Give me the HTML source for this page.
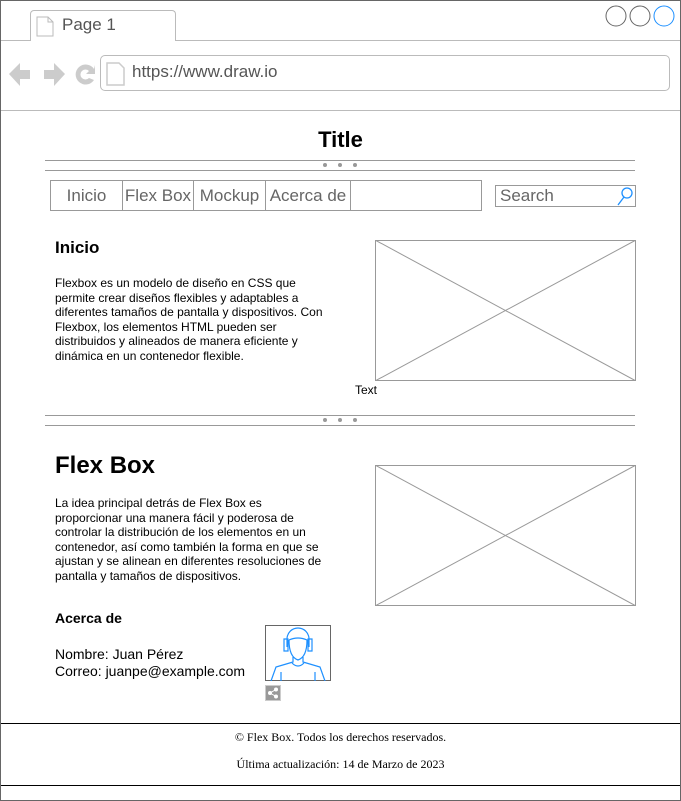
<!DOCTYPE html>
<html><head><meta charset="utf-8"><style>
*{margin:0;padding:0;box-sizing:border-box}
body{width:681px;height:801px;position:relative;overflow:hidden;background:#fff;font-family:"Liberation Sans",Arial,sans-serif;color:#000}
.a{position:absolute}
.hl{position:absolute;height:1px;background:#999}
.dot{position:absolute;width:4px;height:4px;border-radius:50%;background:#999}
.nav div{position:absolute;top:0;height:30px;border-right:1px solid #999;font-size:17px;color:#666;line-height:30px;text-align:center}
p.t{font-size:12px;line-height:14.6px;width:280px}
</style></head><body>
<div class="a" style="left:0;top:0;width:681px;height:801px;border:1px solid #666"></div>
<!-- tab -->
<div class="a" style="left:30px;top:10px;width:146px;height:31px;border:1px solid #bbb;border-bottom:none;border-radius:4px 4px 0 0;background:#fff"></div>
<svg class="a" style="left:36px;top:16px" width="18" height="21"><path d="M1 1h11l5 5v14H1z" fill="#fff" stroke="#bbb"/><path d="M12 1v5h5" fill="none" stroke="#bbb"/></svg>
<div class="a" style="left:62px;top:15px;font-size:17px;color:#555">Page 1</div>
<div class="hl" style="left:1px;top:40px;width:29px;background:#bbb"></div>
<div class="hl" style="left:175px;top:40px;width:505px;background:#bbb"></div>
<svg class="a" style="left:604px;top:4px" width="76" height="24"><circle cx="12" cy="12" r="10" fill="none" stroke="#666"/><circle cx="36" cy="12" r="10" fill="none" stroke="#666"/><circle cx="60" cy="12" r="10" fill="none" stroke="#1e90ff"/></svg>
<!-- address -->
<svg class="a" style="left:8px;top:61px" width="92" height="28"><path d="M1 13l11-11v7h10v9h-10v7z" fill="#ccc"/><path d="M57 13l-11-11v7h-10v9h10v7z" fill="#ccc"/><path d="M86 8a10 10 0 1 0 0 11l-5-2a5 5 0 1 1 0-7l-3 3h9v-9z" fill="#ccc"/></svg>
<div class="a" style="left:100px;top:55px;width:570px;height:36px;border:1px solid #bbb;border-radius:5px"></div>
<svg class="a" style="left:106px;top:62px" width="20" height="24"><path d="M1 1h12l5 5v17H1z" fill="#fff" stroke="#ccc" stroke-width="1.5"/></svg>
<div class="a" style="left:132px;top:62px;font-size:17px;color:#555">https://www.draw.io</div>
<div class="hl" style="left:1px;top:110px;width:679px;background:#bbb"></div>
<!-- title -->
<div class="a" style="left:0;top:127px;width:681px;text-align:center;font-size:22px;font-weight:bold">Title</div>
<div class="hl" style="left:45px;top:160px;width:590px"></div>
<div class="hl" style="left:45px;top:170px;width:590px"></div>
<div class="dot" style="left:323px;top:163px"></div><div class="dot" style="left:338px;top:163px"></div><div class="dot" style="left:353px;top:163px"></div>
<!-- nav -->
<div class="a nav" style="left:50px;top:180px;width:432px;height:31px;border:1px solid #999">
<div style="left:0;width:72px">Inicio</div><div style="left:72px;width:71px">Flex Box</div><div style="left:143px;width:72px">Mockup</div><div style="left:215px;width:85px">Acerca de</div>
</div>
<div class="a" style="left:495px;top:185px;width:141px;height:22px;border:1px solid #999;font-size:17px;color:#666;padding-left:4px;line-height:20px">Search</div>
<svg class="a" style="left:615px;top:186px" width="20" height="20"><circle cx="12" cy="7" r="5" fill="none" stroke="#1e90ff" stroke-width="1.3"/><path d="M9 11L3 19" stroke="#1e90ff" stroke-width="1.3"/></svg>
<!-- section 1 -->
<div class="a" style="left:55px;top:238px;font-size:17px;font-weight:bold">Inicio</div>
<p class="a t" style="left:55px;top:276px">Flexbox es un modelo de diseño en CSS que permite crear diseños flexibles y adaptables a diferentes tamaños de pantalla y dispositivos. Con Flexbox, los elementos HTML pueden ser distribuidos y alineados de manera eficiente y dinámica en un contenedor flexible.</p>
<svg class="a" style="left:375px;top:240px" width="261" height="141"><rect x=".5" y=".5" width="260" height="140" fill="none" stroke="#999"/><path d="M0 0L261 141M261 0L0 141" stroke="#999"/></svg>
<div class="a" style="left:355px;top:383px;font-size:12px">Text</div>
<div class="hl" style="left:45px;top:415px;width:590px"></div>
<div class="hl" style="left:45px;top:425px;width:590px"></div>
<div class="dot" style="left:323px;top:418px"></div><div class="dot" style="left:338px;top:418px"></div><div class="dot" style="left:353px;top:418px"></div>
<!-- section 2 -->
<div class="a" style="left:55px;top:452px;font-size:24px;font-weight:bold">Flex Box</div>
<p class="a t" style="left:55px;top:496px;width:272px">La idea principal detrás de Flex Box es proporcionar una manera fácil y poderosa de controlar la distribución de los elementos en un contenedor, así como también la forma en que se ajustan y se alinean en diferentes resoluciones de pantalla y tamaños de dispositivos.</p>
<svg class="a" style="left:375px;top:465px" width="261" height="141"><rect x=".5" y=".5" width="260" height="140" fill="none" stroke="#999"/><path d="M0 0L261 141M261 0L0 141" stroke="#999"/></svg>
<div class="a" style="left:55px;top:610px;font-size:14px;font-weight:bold">Acerca de</div>
<div class="a" style="left:55px;top:646px;font-size:14px;line-height:17px">Nombre: Juan Pérez<br>Correo: juanpe@example.com</div>
<svg class="a" style="left:265px;top:625px" width="66" height="56"><rect x=".5" y=".5" width="65" height="55" fill="#fff" stroke="#666"/><g fill="none" stroke="#1e90ff" stroke-width="1.2"><path d="M22 22v-8a11 11 0 0 1 22 0v8"/><path d="M19 14h4v12h-4zM43 14h4v12h-4z"/><path d="M24 15q0 17 9 20q9-3 9-20q-9-4-18 0"/><path d="M28 32v5l-17 5-5 14M38 32v5l17 5 5 14"/><path d="M27 38q6 6 12 0"/><path d="M16 47v9M50 47v9"/></g></svg>
<svg class="a" style="left:265px;top:685px" width="16" height="16"><rect x=".5" y=".5" width="15" height="15" fill="#999" stroke="#ccc"/><g fill="#fff" stroke="#fff"><circle cx="11" cy="4.5" r="1.5"/><circle cx="5" cy="8" r="1.5"/><circle cx="11" cy="11.5" r="1.5"/><path d="M11 4.5L5 8l6 3.5" fill="none"/></g></svg>
<!-- footer -->
<div class="hl" style="left:1px;top:723px;width:679px;background:#000"></div>
<div class="a" style="left:0;top:730px;width:681px;text-align:center;font-family:'Liberation Serif',serif;font-size:12px">© Flex Box. Todos los derechos reservados.</div>
<div class="a" style="left:0;top:757px;width:681px;text-align:center;font-family:'Liberation Serif',serif;font-size:12px">Última actualización: 14 de Marzo de 2023</div>
<div class="hl" style="left:1px;top:785px;width:679px;background:#000"></div>
</body></html>
